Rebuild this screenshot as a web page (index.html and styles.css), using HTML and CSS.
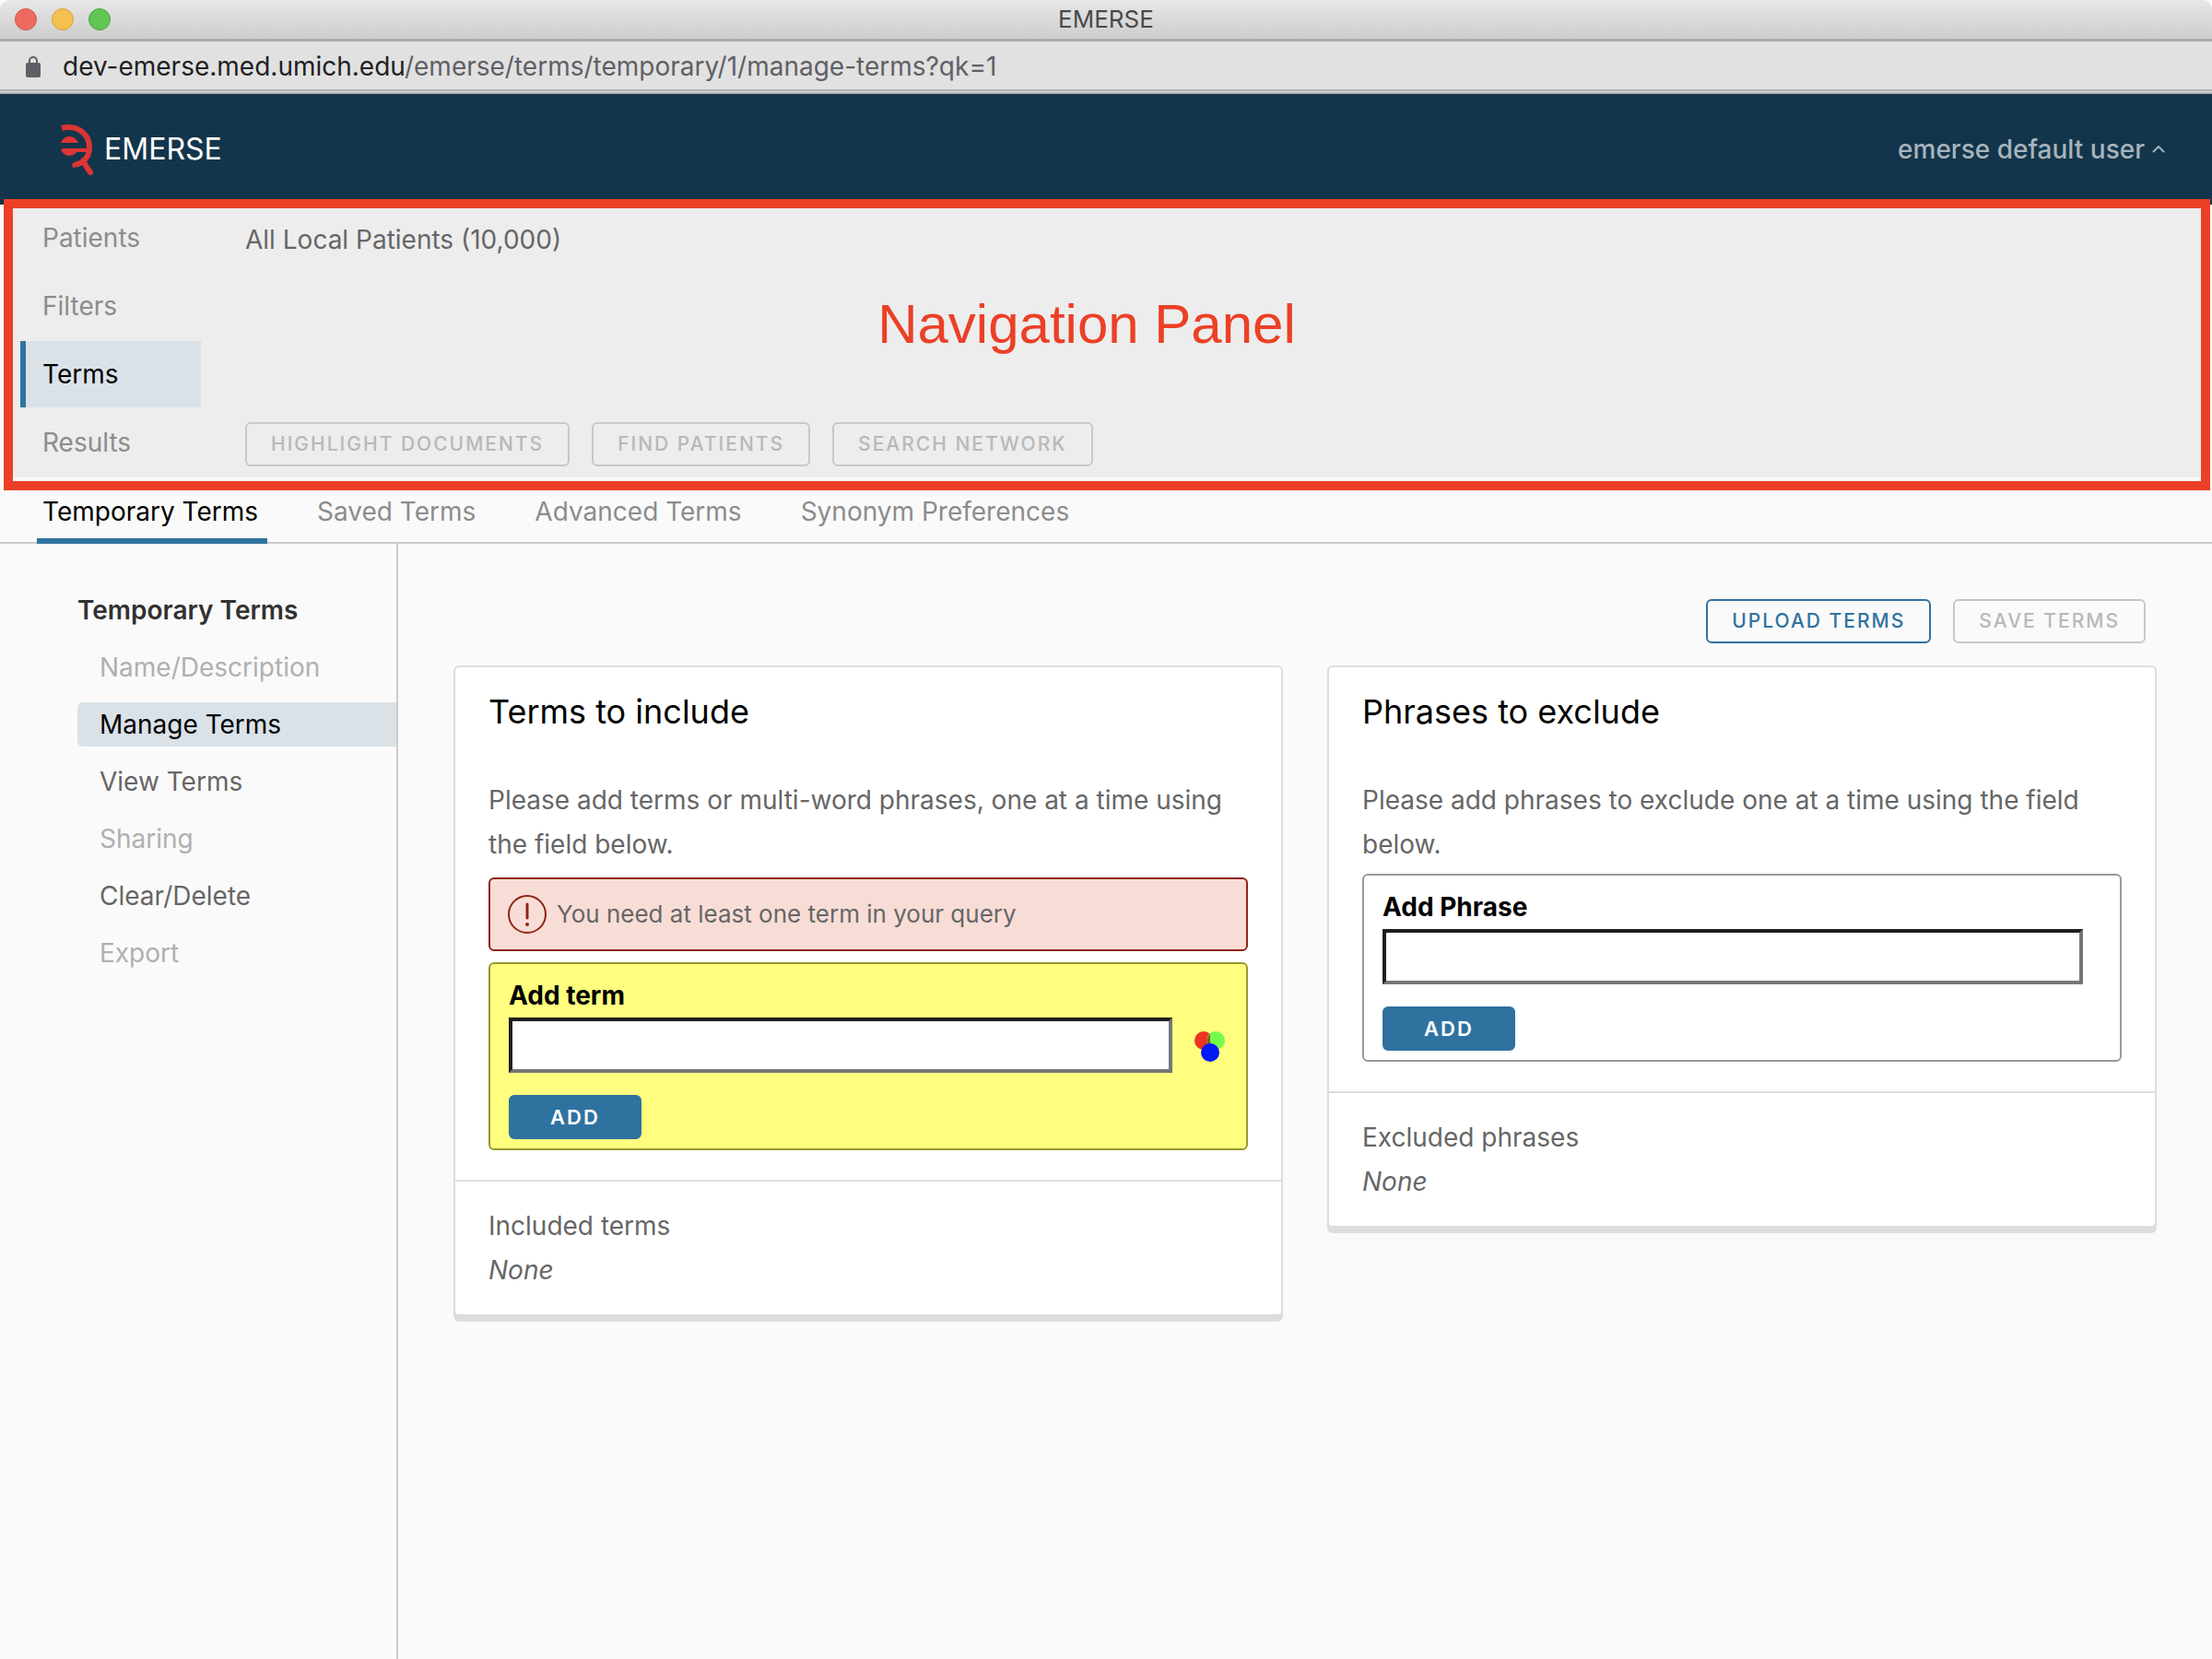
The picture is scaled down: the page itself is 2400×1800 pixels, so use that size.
FILE: index.html
```html
<!DOCTYPE html>
<html lang="en">
<head>
<meta charset="utf-8">
<meta name="viewport" content="width=device-width, initial-scale=1">
<title>EMERSE</title>
<link rel="stylesheet" href="styles.css">
</head>
<body>
<div class="window-bar">
  <div class="window-controls">
    <span class="dot dot-close"></span>
    <span class="dot dot-minimize"></span>
    <span class="dot dot-zoom"></span>
  </div>
  <span class="window-title">EMERSE</span>
</div>
<div class="address-bar">
  <svg class="lock" viewBox="0 0 16 24" aria-hidden="true">
    <path d="M4 10V6a4 4 0 0 1 8 0v4" fill="none" stroke="#5f6066" stroke-width="2"/>
    <rect x="0" y="8" width="16" height="16" rx="2" fill="#5f6066"/>
  </svg>
  <span class="url"><span class="url-host">dev-emerse.med.umich.edu</span>/emerse/terms/temporary/1/manage-terms?qk=1</span>
</div>

<header class="app-header">
  <a class="brand" href="#">
    <svg class="brand-mark" viewBox="0 0 36 58" aria-hidden="true">
      <g fill="none" stroke="#dc3535" stroke-width="6">
        <path d="M2 6Q6 5 9 5C22 5 32 14 32 27C32 35 29 39 25 42"/>
        <path d="M25 42L33 54" stroke-linecap="round"/>
        <path d="M2 30H31" stroke-width="4"/>
      </g>
      <path d="M1 22Q4 15 10 15Q17 15 20 22Z" fill="#dc3535"/>
      <path d="M1 29H20Q17 36 10 36Q4 36 1 29Z" fill="#dc3535"/>
      <path d="M13 45Q18 41 27 40L25 46Q19 49 14 49Z" fill="#dc3535"/>
    </svg>
    <span>EMERSE</span>
  </a>
  <button class="user-menu" type="button">emerse default user
    <svg class="caret" viewBox="0 0 14 8" aria-hidden="true"><path d="M1 7L7 1L13 7" fill="none" stroke="currentColor" stroke-width="2"/></svg>
  </button>
</header>

<section class="nav-panel">
  <nav class="steps">
    <a class="step" href="#">Patients</a>
    <a class="step" href="#">Filters</a>
    <a class="step step-active" href="#">Terms</a>
    <a class="step" href="#">Results</a>
  </nav>
  <div class="nav-detail">
    <div class="nav-summary">All Local Patients (10,000)</div>
    <div class="button-row">
      <button class="btn btn-outline" type="button" disabled>HIGHLIGHT DOCUMENTS</button>
      <button class="btn btn-outline" type="button" disabled>FIND PATIENTS</button>
      <button class="btn btn-outline" type="button" disabled>SEARCH NETWORK</button>
    </div>
  </div>
  <div class="callout"><span class="callout-label">Navigation Panel</span></div>
</section>

<nav class="tabs">
  <a class="tab tab-active" href="#">Temporary Terms</a>
  <a class="tab" href="#">Saved Terms</a>
  <a class="tab" href="#">Advanced Terms</a>
  <a class="tab" href="#">Synonym Preferences</a>
</nav>

<div class="workspace">
  <aside class="sidebar">
    <h2 class="sidebar-title">Temporary Terms</h2>
    <a class="side-link side-disabled" href="#">Name/Description</a>
    <a class="side-link side-active" href="#">Manage Terms</a>
    <a class="side-link" href="#">View Terms</a>
    <a class="side-link side-disabled" href="#">Sharing</a>
    <a class="side-link" href="#">Clear/Delete</a>
    <a class="side-link side-disabled" href="#">Export</a>
  </aside>

  <main class="content">
    <div class="button-row content-actions">
      <button class="btn btn-outline" type="button">UPLOAD TERMS</button>
      <button class="btn btn-outline" type="button" disabled>SAVE TERMS</button>
    </div>
    <div class="cards">
      <section class="card">
        <div class="card-body">
          <h3 class="card-title">Terms to include</h3>
          <p class="card-text">Please add terms or multi-word phrases, one at a time using the field below.</p>
          <div class="alert" role="alert">
            <svg class="alert-icon" viewBox="0 0 44 44" aria-hidden="true">
              <circle cx="22" cy="22" r="20" fill="none" stroke="#8e2412" stroke-width="2"/>
              <path d="M22 11V26" stroke="#8e2412" stroke-width="3" stroke-linecap="round"/>
              <circle cx="22" cy="33" r="2" fill="#8e2412"/>
            </svg>
            <span>You need at least one term in your query</span>
          </div>
          <form class="entry entry-highlight">
            <label class="entry-label" for="term">Add term</label>
            <div class="entry-row">
              <input class="entry-input" id="term" type="text">
              <button class="color-picker" type="button" aria-label="Choose color">
                <svg viewBox="0 0 36 36" aria-hidden="true">
                  <circle cx="10" cy="13" r="10" fill="#eb3323"/>
                  <circle cx="23" cy="13" r="10" fill="#75fb4c"/>
                  <path d="M17 6A10 10 0 0 0 14 17L17 19Z" fill="#8a5a20"/>
                  <circle cx="17" cy="26" r="10" fill="#0018f5"/>
                </svg>
              </button>
            </div>
            <button class="btn btn-primary" type="button">ADD</button>
          </form>
        </div>
        <div class="card-footer">
          <div>Included terms</div>
          <em>None</em>
        </div>
      </section>

      <section class="card">
        <div class="card-body">
          <h3 class="card-title">Phrases to exclude</h3>
          <p class="card-text">Please add phrases to exclude one at a time using the field below.</p>
          <form class="entry">
            <label class="entry-label" for="phrase">Add Phrase</label>
            <div class="entry-row entry-row-plain">
              <input class="entry-input" id="phrase" type="text">
            </div>
            <button class="btn btn-primary" type="button">ADD</button>
          </form>
        </div>
        <div class="card-footer">
          <div>Excluded phrases</div>
          <em>None</em>
        </div>
      </section>
    </div>
  </main>
</div>
</body>
</html>
```
FILE: styles.css
```css
*, *::before, *::after { box-sizing: border-box; }

body {
  margin: 0;
  min-height: 100vh;
  display: flex;
  flex-direction: column;
  background: #fafafa;
  color: #666;
  font-family: Inter, "Liberation Sans", sans-serif;
  font-size: 28px;
  line-height: 48px;
}

a { color: inherit; text-decoration: none; }
button, input { font: inherit; }
h2, h3, p { margin: 0; }

/* Browser window */
.window-bar {
  display: grid;
  grid-template-columns: 1fr auto 1fr;
  align-items: center;
  height: 45px;
  padding: 0 16px;
  border-bottom: 3px solid #aaa;
  border-top-left-radius: 10px;
  border-top-right-radius: 10px;
  background: linear-gradient(#e7e7e7, #cdcdcd);
  color: #4a4a4a;
  font-size: 26px;
  line-height: 42px;
}
.window-controls { display: flex; gap: 16px; }
.dot { width: 24px; height: 24px; border: 1px solid; border-radius: 50%; }
.dot-close { background: #ed6a5e; border-color: #d5544a; }
.dot-minimize { background: #f5c04f; border-color: #d6a13c; }
.dot-zoom { background: #61c554; border-color: #4ca83f; }

.address-bar {
  display: flex;
  align-items: center;
  gap: 24px;
  height: 57px;
  padding: 2px 28px 0;
  border-bottom: 5px double #b0b0b0;
  background: #e1e1e1;
  color: #5f6066;
}
.lock { width: 16px; height: 24px; }
.url-host { color: #202124; }

/* Application header */
.app-header {
  display: flex;
  align-items: center;
  justify-content: space-between;
  height: 120px;
  padding: 0 51px 0 65px;
  background: #13354b;
}
.brand {
  display: flex;
  align-items: center;
  gap: 12px;
  color: #fff;
  font-size: 32px;
}
.brand-mark { width: 36px; height: 58px; }
.user-menu {
  display: flex;
  align-items: center;
  gap: 8px;
  padding: 0;
  border: 0;
  background: none;
  color: #a7b4bc;
  font-weight: 500;
}
.caret { width: 14px; height: 8px; }

/* Navigation panel */
.nav-panel {
  position: relative;
  display: flex;
  gap: 48px;
  margin: 0 4px;
  padding-left: 18px;
  background: #ededed;
}
.steps {
  display: flex;
  flex-direction: column;
  gap: 2px;
  width: 196px;
  padding-bottom: 2px;
  color: #8c8c8c;
}
.step {
  padding: 12px 18px;
  border-left: 6px solid transparent;
}
.step-active {
  border-left-color: #2f72a0;
  background: #dae2e8;
  color: #000;
}
.nav-detail {
  display: flex;
  flex-direction: column;
  justify-content: space-between;
  padding: 14px 0 12px;
}
.callout {
  position: absolute;
  inset: -6px -2px -14px 0;
  display: flex;
  align-items: center;
  justify-content: center;
  padding: 0 44px 44px 0;
  border: 10px solid #eb4026;
  pointer-events: none;
}
.callout-label {
  color: #eb4026;
  font-family: "Liberation Sans", Arial, sans-serif;
  font-size: 60px;
  line-height: 72px;
}

/* Buttons */
.button-row { display: flex; gap: 24px; }
.btn {
  height: 48px;
  padding: 0 26px;
  border: 2px solid #2f72a0;
  border-radius: 6px;
  font-size: 21px;
  font-weight: 500;
  line-height: 44px;
  letter-spacing: 2px;
}
.btn-outline { background: transparent; color: #2f72a0; }
.btn-outline:disabled { border-color: #c8c8c8; color: #b8b8b8; }
.btn-primary {
  display: block;
  width: 144px;
  background: #2f72a0;
  color: #fff;
  font-size: 22px;
  font-weight: 600;
}

/* Tabs */
.tabs {
  display: flex;
  gap: 48px;
  height: 72px;
  padding: 0 40px;
  border-bottom: 2px solid #ccc;
  color: #8c8c8c;
}
.tab {
  height: 72px;
  padding: 13px 10px 0 6px;
  border-bottom: 6px solid transparent;
}
.tab-active { border-bottom-color: #2f72a0; color: #000; }

/* Workspace */
.workspace { display: flex; flex: 1; }
.sidebar {
  display: flex;
  flex-direction: column;
  flex: none;
  gap: 14px;
  width: 432px;
  padding: 48px 0 48px 84px;
  border-right: 2px solid #ccc;
}
.sidebar-title {
  color: #313131;
  font-size: 28px;
  font-weight: 600;
}
.side-link {
  padding-left: 24px;
  border-radius: 6px 0 0 6px;
}
.side-disabled { color: #b0b0b0; }
.side-active { background: #dae2e8; color: #000; }

.content { flex: 1; padding: 60px; }
.content-actions {
  justify-content: flex-end;
  margin: 0 12px 24px 0;
}
.cards {
  display: grid;
  grid-template-columns: 1fr 1fr;
  align-items: start;
  gap: 48px;
}
.card {
  border: 2px solid #ddd;
  border-radius: 6px;
  background: #fff;
  box-shadow: 0 6px 0 #ddd;
}
.card-body { padding: 24px 36px 32px; }
.card-title {
  margin-bottom: 48px;
  color: #000;
  font-size: 36px;
  font-weight: 400;
}
.card-text { margin-bottom: 8px; }
.card-footer {
  padding: 24px 36px;
  border-top: 2px solid #ddd;
}
.card-footer em { display: block; }

.alert {
  display: flex;
  align-items: center;
  gap: 10px;
  height: 80px;
  margin: 12px 0;
  padding: 0 18px;
  border: 2px solid #8e2412;
  border-radius: 6px;
  background: #f8ddd7;
  font-size: 26px;
}
.alert-icon { width: 44px; height: 44px; }

.entry {
  padding: 10px 20px;
  border: 2px solid #999;
  border-radius: 6px;
}
.entry-highlight { border-color: #97972f; background: #fffe7f; }
.entry-label {
  display: block;
  color: #000;
  font-weight: 700;
}
.entry-row {
  display: flex;
  align-items: center;
  gap: 24px;
  margin-bottom: 24px;
}
.entry-row-plain { padding-right: 20px; }
.entry-input {
  flex: 1;
  min-width: 0;
  height: 60px;
  padding: 0 12px;
  border: 4px solid;
  border-color: #1f1f1f #767676 #767676 #1f1f1f;
  background: #fff;
}
.color-picker {
  width: 36px;
  height: 36px;
  padding: 0;
  border: 0;
  background: none;
}
.color-picker svg { display: block; }
```
